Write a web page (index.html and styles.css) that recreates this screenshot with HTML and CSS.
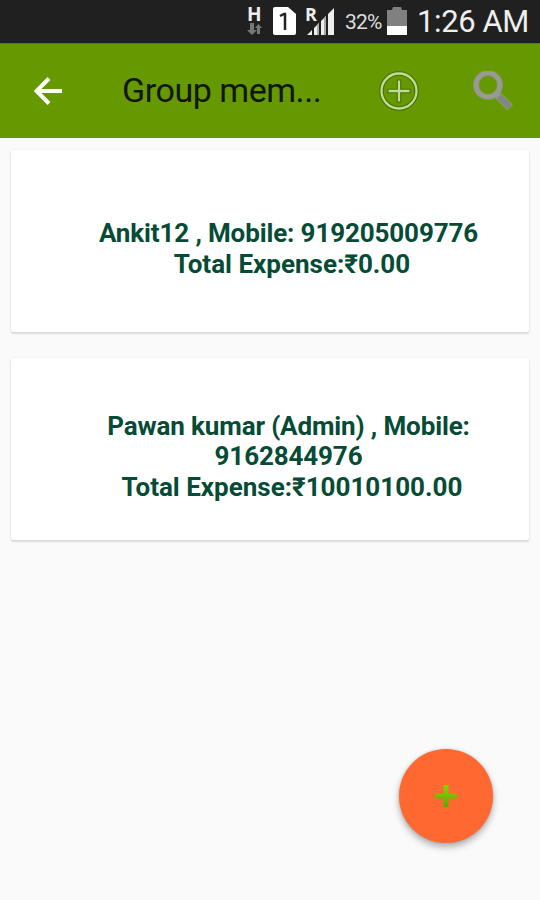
FILE: index.html
```
<!DOCTYPE html>
<html lang="en">
<head>
<meta charset="utf-8">
<meta name="viewport" content="width=device-width">
<title>Group members</title>
<link rel="stylesheet" href="styles.css">
</head>
<body>
<div class="screen">
  <header class="status">
    <div class="network">
      <span class="tiny">H</span>
      <svg class="arrows" width="16" height="13" viewBox="0 0 16 13"><path d="M3 0h4v7h3l-5 5-5-5h3zM10 11h3V5h2l-3.500-4L8 5h2z" fill="#777"/></svg>
    </div>
    <svg class="sim" width="23" height="28" viewBox="0 0 23 28"><path d="M2 0h13l8 7v19q0 2-2 2H2q-2 0-2-2V2q0-2 2-2z" fill="#fff"/><path d="M7 9l4-2h1v16" fill="none" stroke="#222" stroke-width="2.500"/></svg>
    <div class="signal">
      <span class="tiny">R</span>
      <svg width="28" height="28" viewBox="0 0 28 28"><path d="M0 28l5-5v5zM7 28v-7l5-5v12zM14 28V14l5-5v19zM21 28V7l6-6v27z" fill="#eee"/><path d="M10 18l2-2v12h-2zM17 11l2-2v19h-2z" fill="#aaa"/></svg>
    </div>
    <span class="percent">32%</span>
    <svg class="battery" width="20" height="28" viewBox="0 0 20 28"><path d="M0 3h5l1-3h8l1 3h5v16H0z" fill="#808080"/><path d="M0 19h20v9H0z" fill="#fff"/></svg>
    <span class="time">1:26 AM</span>
  </header>
  <nav class="bar">
    <svg class="back" width="28" height="28" viewBox="0 0 28 28"><path d="M28 14H2M15 1.500L2.500 14l12.500 12.500" fill="none" stroke="#fff" stroke-width="4"/></svg>
    <h1 class="title">Group mem...</h1>
    <svg class="add" width="40" height="40" viewBox="0 0 40 40" fill="none"><circle cx="20" cy="20" r="17.500" stroke="#466d08" stroke-width="4.500"/><circle cx="20" cy="20" r="17.500" stroke="#bddd90" stroke-width="2.300"/><path d="M20 8.500v23M8.500 20h23" stroke="#466d08" stroke-width="4.500"/><path d="M20 9.500v21M9.500 20h21" stroke="#bddd90" stroke-width="2.300"/></svg>
    <svg class="search" width="40" height="40" viewBox="0 0 40 40" fill="none"><circle cx="15" cy="14" r="12" stroke="#85986a" stroke-width="6"/><path d="M25 24.500l12 12" stroke="#8b9b74" stroke-width="8"/><circle cx="15" cy="14" r="12" stroke="#999" stroke-width="4.200"/><path d="M23 22.500l3 3" stroke="#999" stroke-width="4"/><path d="M26 25.500l10.500 10.500" stroke="#858585" stroke-width="6"/></svg>
  </nav>
  <main class="list">
    <article class="card">
      <p class="line name-one">Ankit12 , Mobile: 919205009776</p>
      <p class="line total">Total Expense:₹0.00</p>
    </article>
    <article class="card">
      <p class="line name-two">Pawan kumar (Admin) , Mobile:</p>
      <p class="line phone">9162844976</p>
      <p class="line total">Total Expense:₹10010100.00</p>
    </article>
  </main>
  <button class="fab" aria-label="Add">
    <svg width="22" height="22" viewBox="0 0 22 22"><defs><linearGradient id="green" x2="0" y2="1"><stop stop-color="#8bd400"/><stop offset="1" stop-color="#5ca800"/></linearGradient></defs><path d="M8.500 0h5v8.500H22v5h-8.500V22h-5v-8.500H0v-5h8.500z" fill="url(#green)"/></svg>
  </button>
</div>
</body>
</html>
```
FILE: styles.css
```
* { box-sizing: border-box; }
body {
  margin: 0;
  font-family: Roboto, "Noto Sans", sans-serif;
  background: #fafafa;
}
.screen {
  position: relative;
  width: 540px;
  height: 900px;
  overflow: hidden;
}
.status {
  display: flex;
  align-items: flex-start;
  height: 43px;
  padding: 7px 0 0 247px;
  background: #202020;
  color: #eee;
  white-space: nowrap;
}
.network { width: 16px; margin-right: 10px; }
.tiny {
  display: block;
  font: bold 19px/14px "Open Sans", sans-serif;
}
.network .tiny { height: 16px; }
.arrows { display: block; }
.signal { position: relative; width: 28px; height: 28px; margin: 0 10px 0 11px; }
.signal svg { display: block; }
.signal .tiny { position: absolute; left: -2px; top: 0; font-size: 18px; }
.percent { width: 42px; font-size: 21px; line-height: 31px; letter-spacing: -0.8px; color: #ddd; }
.time { margin-left: 10px; font-size: 31px; line-height: 30px; letter-spacing: -0.4px; }
.bar {
  display: flex;
  align-items: center;
  height: 95px;
  padding-left: 34px;
  background: #669900;
  border-top: 1px solid #568000;
}
.title {
  width: 200px;
  margin: 0 0 2px 60px;
  font-size: 34px;
  line-height: 42px;
  font-weight: 400;
  letter-spacing: -0.45px;
  color: #10160a;
  white-space: nowrap;
}
.add { margin-left: 57px; }
.search { margin-left: 54px; }
.list {
  display: flex;
  flex-direction: column;
  gap: 26px;
  padding: 12px 11px;
}
.card {
  display: flex;
  flex-direction: column;
  align-items: center;
  justify-content: center;
  height: 182px;
  padding: 15px 0 0 37px;
  border-radius: 2px;
  background: #fff;
  box-shadow: 0 2px 2px rgba(0, 0, 0, .12), 0 0 2px rgba(0, 0, 0, .08);
}
.line {
  margin: 0;
  font-size: 26px;
  line-height: 30.300px;
  font-weight: 700;
  letter-spacing: -0.13px;
  color: #064b35;
  white-space: nowrap;
}
.total { padding-left: 7px; letter-spacing: 0; }
.fab {
  position: absolute;
  left: 399px;
  top: 749px;
  display: flex;
  align-items: center;
  justify-content: center;
  width: 94px;
  height: 94px;
  padding: 0;
  border: 0;
  border-radius: 50%;
  background: #ff6830;
  box-shadow: 0 4px 7px rgba(0, 0, 0, .3), 0 0 3px rgba(0, 0, 0, .15);
}
```
